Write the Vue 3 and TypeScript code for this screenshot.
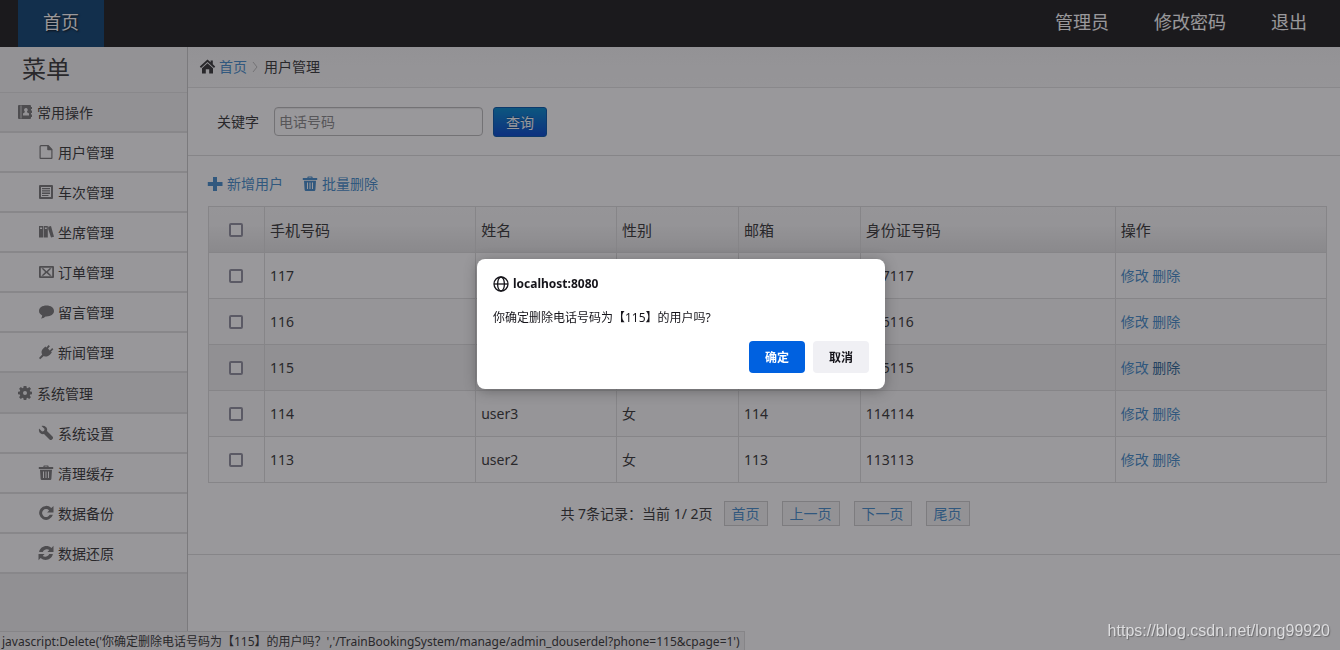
<script setup lang="ts">
import { ref } from 'vue'

interface MenuItem {
  label: string
  icon: string
}
interface MenuGroup extends MenuItem {
  items: MenuItem[]
}
interface User {
  phone: string
  name: string
  sex: string
  mail: string
  card: string
}

const icons: Record<string, string> = {
  book: 'M1 0H12Q13 0 13 1V2H14V4H13V5.5H14V8H13V9.5H14V12H13V13Q13 14 12 14H1Q0 14 0 13V1Q0 0 1 0ZM2.6 0.6V13.4H3.4V0.6ZM7.8 3A1.9 1.9 0 0 0 6.8 6.4V7.2L5 8.4V10.4H11V8.4L9 7.2V6.4A1.9 1.9 0 0 0 7.8 3Z',
  file: 'M2 0H9.5L13.5 4.2V13Q13.5 14 12.5 14H1.5Q0.5 14 0.5 13V1.5Q0.5 0 2 0ZM2.2 1.2Q1.7 1.2 1.7 1.8V12.8H12.3V5.2H9Q8.2 5.2 8.2 4.4V1.2Z',
  list: 'M1 0H13Q14 0 14 1V13Q14 14 13 14H1Q0 14 0 13V1Q0 0 1 0ZM2 2V12H12V2ZM3 3H11V4.3H3ZM3 5.3H11V6.6H3ZM3 7.6H11V8.9H3ZM3 9.9H9.5V11.1H3Z',
  books: 'M0 1H4.2V12.6H0ZM1.1 2.4V4H3.1V2.4ZM4.8 1H8.8V12.6H4.8ZM5.9 2.4V4H7.7V2.4ZM9.2 1.8L12 1L15 11.8L12 12.6L9.2 4Z',
  mail: 'M1 1H14Q15 1 15 2V12Q15 13 14 13H1Q0 13 0 12V2Q0 1 1 1ZM1.8 2.8V11.2H13.2V2.8ZM2.4 3.3H4.4L7.5 6.2L10.6 3.3H12.6L8.9 7L12.6 10.7H10.6L7.5 7.9L4.4 10.7H2.4L6.1 7Z',
  comment: 'M7.5 0.6C11.8 0.6 15 2.8 15 6C15 9.2 11.8 11.4 7.5 11.4L6.6 11.4Q4.8 13.4 1.8 13.6Q3.2 12.2 3.2 10.4C1.2 9.5 0 8 0 6C0 2.8 3.2 0.6 7.5 0.6Z',
  plug: 'M9.6 0L10.9 1.2L9 3.6L10.8 5.4L13.2 3L14.4 4.2L12 6.7L12.9 7.6L10.9 9.8C9 11.7 6.6 12 4.8 11L1.2 14.2L0 13L3.2 9.4C2 7.6 2.4 5.4 4 3.8L6.4 1.4L7.4 2.4Z',
  cog: 'M5.6 0H8.4L8.7 1.8L9.7 2.2L11.3 1.1L13 2.8L11.8 4.4L12.2 5.4L14 5.7V8.3L12.2 8.6L11.8 9.6L12.9 11.2L11.2 12.9L9.6 11.8L8.6 12.2L8.3 14H5.7L5.4 12.2L4.4 11.8L2.8 12.9L1.1 11.2L2.2 9.6L1.8 8.6L0 8.3V5.7L1.8 5.4L2.2 4.4L1.1 2.8L2.8 1.1L4.4 2.2L5.4 1.8ZM7 5A2 2 0 1 0 7 9A2 2 0 1 0 7 5Z',
  wrench: 'M2.5 0L5.6 3.1L5 5L3.1 5.6L0 2.5C-0.4 4.5 0.1 6.3 1.4 7.3Q3 8.5 5 8L10.5 13.5Q11.6 14.5 12.7 13.8L13.8 12.7Q14.5 11.6 13.5 10.6L8 5C8.5 3.4 8 1.9 6.9 0.9C5.7 -0.2 4 -0.5 2.5 0Z',
  trash: 'M5.2 -0.6H8.8Q9.6 -0.6 9.6 0.2V1H14.2V3H-0.2V1H4.4V0.2Q4.4 -0.6 5.2 -0.6ZM5.6 0.4V1H8.4V0.4ZM1 3.8H13L12.4 12.8Q12.3 14 11.2 14H2.8Q1.7 14 1.6 12.8ZM4 5.4V12H5V5.4ZM6.5 5.4V12H7.5V5.4ZM9 5.4V12H10V5.4Z',
  repeat: 'M14.5 0V6.4H8.1L10.1 4.4A4 4 0 1 0 10.7 8.8H13.9A7 7 0 1 1 12.3 2.1Z',
  refresh: 'M14.5 -0.2V5.9H8.4L10.3 4C8.2 2.6 5 3.2 3.8 5.9H0.1C1.1 0.2 8.2 -1.8 12.4 1.9ZM-0.5 14.2V8.1H5.6L3.7 10C5.8 11.4 9 10.8 10.2 8.1H13.9C12.9 13.8 5.8 15.8 1.6 12.1Z',
  home: 'M7.5 -0.6L10.6 2.2V0.6H12.8V4.2L15.2 6.6L14 7.9L7.5 1.9L1 7.9L-0.2 6.6ZM7.5 3.3L13 8.3V13.6H9.2V9.3H5.8V13.6H2V8.3Z',
  plus: 'M5 0H9V5H14.5V9H9V14H5V9H-0.2V5H5Z',
}

const menu: MenuGroup[] = [
  {
    label: '常用操作',
    icon: 'book',
    items: [
      { label: '用户管理', icon: 'file' },
      { label: '车次管理', icon: 'list' },
      { label: '坐席管理', icon: 'books' },
      { label: '订单管理', icon: 'mail' },
      { label: '留言管理', icon: 'comment' },
      { label: '新闻管理', icon: 'plug' },
    ],
  },
  {
    label: '系统管理',
    icon: 'cog',
    items: [
      { label: '系统设置', icon: 'wrench' },
      { label: '清理缓存', icon: 'trash' },
      { label: '数据备份', icon: 'repeat' },
      { label: '数据还原', icon: 'refresh' },
    ],
  },
]

const users: User[] = [
  { phone: '117', name: '', sex: '', mail: '', card: '117117' },
  { phone: '116', name: '', sex: '', mail: '', card: '116116' },
  { phone: '115', name: '', sex: '', mail: '', card: '115115' },
  { phone: '114', name: 'user3', sex: '女', mail: '114', card: '114114' },
  { phone: '113', name: 'user2', sex: '女', mail: '113', card: '113113' },
]

const columns = ['手机号码', '姓名', '性别', '邮箱', '身份证号码', '操作']
const pages = ['首页', '上一页', '下一页', '尾页']
const active = '115'
const keyword = ref('')
const confirming = ref(true)
</script>

<template>
  <div class="app">
    <header class="topbar">
      <a class="tab" href="#">首页</a>
      <nav class="account">
        <a href="#">管理员</a>
        <a href="#">修改密码</a>
        <a href="#">退出</a>
      </nav>
    </header>

    <div class="body">
      <aside class="sidebar">
        <h1 class="menu-title">菜单</h1>
        <section v-for="group in menu" :key="group.label" class="group">
          <h2 class="group-title">
            <svg class="icon" viewBox="0 0 14 14"><path :d="icons[group.icon]" fill-rule="evenodd" /></svg>
            <span>{{ group.label }}</span>
          </h2>
          <a v-for="item in group.items" :key="item.label" class="item" href="#">
            <svg class="icon" viewBox="0 0 14 14"><path :d="icons[item.icon]" fill-rule="evenodd" /></svg>
            <span>{{ item.label }}</span>
          </a>
        </section>
      </aside>

      <main class="main">
        <nav class="crumbs">
          <svg class="icon home" viewBox="0 0 14 14"><path :d="icons.home" /></svg>
          <a href="#">首页</a>
          <svg class="chevron" viewBox="0 0 6 12"><path d="M1 1L5 6L1 11" /></svg>
          <span>用户管理</span>
        </nav>

        <form class="search" @submit.prevent>
          <label for="keyword">关键字</label>
          <input id="keyword" v-model="keyword" type="text" placeholder="电话号码" />
          <button type="submit">查询</button>
        </form>

        <section class="content">
          <div class="tools">
            <a href="#">
              <svg class="icon" viewBox="0 0 14 14"><path :d="icons.plus" /></svg>
              <span>新增用户</span>
            </a>
            <a href="#">
              <svg class="icon" viewBox="0 0 14 14"><path :d="icons.trash" fill-rule="evenodd" /></svg>
              <span>批量删除</span>
            </a>
          </div>

          <table class="users">
            <colgroup>
              <col class="c-check" />
              <col class="c-phone" />
              <col class="c-name" />
              <col class="c-small" />
              <col class="c-small" />
              <col class="c-card" />
              <col class="c-action" />
            </colgroup>
            <thead>
              <tr>
                <th class="check"><input type="checkbox" aria-label="全选" /></th>
                <th v-for="column in columns" :key="column">{{ column }}</th>
              </tr>
            </thead>
            <tbody>
              <tr v-for="user in users" :key="user.phone" :class="{ active: user.phone === active }">
                <td class="check"><input type="checkbox" :aria-label="user.phone" /></td>
                <td>{{ user.phone }}</td>
                <td>{{ user.name }}</td>
                <td>{{ user.sex }}</td>
                <td>{{ user.mail }}</td>
                <td>{{ user.card }}</td>
                <td><a href="#">修改</a> <a class="delete" href="#" @click.prevent="confirming = true">删除</a></td>
              </tr>
            </tbody>
          </table>

          <div class="pager">
            <span>共 7条记录：当前 1/ 2页</span>
            <nav>
              <a v-for="page in pages" :key="page" href="#">{{ page }}</a>
            </nav>
          </div>
        </section>
      </main>
    </div>

    <div class="status">javascript:Delete('你确定删除电话号码为【115】的用户吗？','/TrainBookingSystem/manage/admin_douserdel?phone=115&amp;cpage=1')</div>

    <div v-if="confirming" class="shade"></div>
    <div v-if="confirming" class="dialog" role="dialog" aria-labelledby="dialog-title">
      <div id="dialog-title" class="dialog-title">
        <svg viewBox="0 0 16 16">
          <circle cx="8" cy="8" r="7" />
          <ellipse cx="8" cy="8" rx="3.4" ry="7" />
          <path d="M1 8H15" />
        </svg>
        <span>localhost:8080</span>
      </div>
      <p>你确定删除电话号码为【115】的用户吗?</p>
      <div class="dialog-actions">
        <button class="primary" type="button" @click="confirming = false">确定</button>
        <button type="button" @click="confirming = false">取消</button>
      </div>
    </div>

    <div class="watermark">https://blog.csdn.net/long99920</div>
  </div>
</template>

<style>
body {
  margin: 0;
}
</style>

<style scoped>
.app,
.app * {
  box-sizing: border-box;
}
.app {
  display: flex;
  flex-direction: column;
  min-height: 100vh;
  color: #333;
  background: #fff;
  font-family: 'Noto Sans', 'Noto Sans CJK SC', sans-serif;
  font-size: 14px;
  line-height: 20px;
}
a {
  color: #428bca;
  text-decoration: none;
}
button,
input {
  font-family: inherit;
}
.icon {
  width: 14px;
  height: 14px;
  flex: none;
  fill: currentColor;
  overflow: visible;
}

.topbar {
  display: flex;
  justify-content: space-between;
  height: 47px;
  padding: 0 33px 0 18px;
  background: #1b1b1b;
  font-size: 18px;
  line-height: 44px;
}
.topbar a {
  color: #fff;
}
.tab {
  padding: 0 25px;
  background: #0a4070;
  text-shadow: 1px 1px 2px #000;
}
.account {
  display: flex;
  gap: 45px;
}

.body {
  display: flex;
  flex: 1;
}
.sidebar {
  width: 188px;
  flex: none;
  background: #f1f1f1;
  border-right: 1px solid #c8c8c8;
}
.menu-title {
  margin: 0;
  height: 46px;
  padding-left: 22px;
  border-bottom: 1px solid #e2e2e2;
  background: #f5f5f5;
  font-size: 24px;
  font-weight: 400;
  line-height: 44px;
}
.group-title,
.item {
  display: flex;
  align-items: center;
  gap: 5px;
  height: 40px;
  margin: 0;
  border-bottom: 2px solid #e0e0e0;
  color: #333;
  font-size: 14px;
  font-weight: 400;
}
.group-title span,
.item span {
  padding-top: 2px;
}
.group-title {
  padding-left: 18px;
  background: #f3f3f3;
}
.group + .group .group-title {
  height: 41px;
}
.item {
  padding-left: 39px;
  background: #fefefe;
}
.sidebar .icon {
  color: #777;
}

.main {
  flex: 1;
  min-width: 0;
}
.crumbs {
  display: flex;
  align-items: center;
  height: 41px;
  padding-left: 12px;
  border-bottom: 1px solid #e2e2e2;
  background: linear-gradient(#f5f5f5, #f9f9f9);
}
.home {
  margin-right: 5px;
}
.chevron {
  width: 6px;
  height: 12px;
  margin: 0 6px 0 5px;
  fill: none;
  stroke: #bbb;
}
.search {
  display: flex;
  align-items: center;
  height: 68px;
  padding-left: 29px;
  border-bottom: 1px solid #ddd;
}
.search input {
  width: 209px;
  height: 29px;
  margin: 0 10px 0 15px;
  padding: 0 4px;
  border: 1px solid #bbb;
  border-radius: 4px;
  background: #fff;
  box-shadow: inset 0 1px 1px rgba(0, 0, 0, 0.08);
  color: #333;
  font-size: 14px;
}
.search input::placeholder {
  color: #888;
  opacity: 1;
}
.search button {
  height: 30px;
  padding: 0 12px;
  border: 1px solid #0055aa;
  border-radius: 3px;
  background: linear-gradient(#0088cc, #0044cc);
  color: #fff;
  font-size: 14px;
  text-shadow: 0 -1px 0 rgba(0, 0, 0, 0.25);
}

.content {
  padding: 17px 13px 28px 20px;
  border-bottom: 1px solid #ddd;
}
.tools {
  display: flex;
  gap: 20px;
  margin-bottom: 12px;
}
.tools a {
  display: flex;
  align-items: center;
  gap: 5px;
  height: 21px;
}
.users {
  width: 100%;
  table-layout: fixed;
  border-collapse: collapse;
}
.c-check {
  width: 5%;
}
.c-phone {
  width: 18.9%;
}
.c-name {
  width: 12.6%;
}
.c-small {
  width: 10.9%;
}
.c-card {
  width: 22.8%;
}
.c-action {
  width: 18.9%;
}
.users th,
.users td {
  height: 46px;
  padding: 0 5px;
  border: 1px solid #ddd;
  text-align: left;
  font-weight: 400;
}
.users th {
  font-size: 15px;
}
.users .check {
  text-align: center;
}
.users thead tr {
  background: linear-gradient(#f9f9f9, #f7f7f7 40%, #e3e3e3);
}
.users tbody tr:nth-child(even) {
  background: #f9f9f9;
}
.users tbody tr.active {
  background: #f0f0f0;
}
.active .delete {
  color: #2a6496;
}
.users input {
  appearance: none;
  display: block;
  width: 14px;
  height: 14px;
  margin: 0 auto;
  border: 2px solid #8f8f9d;
  border-radius: 2px;
  background: #fff;
}
.pager {
  display: flex;
  justify-content: center;
  align-items: center;
  gap: 11px;
  margin-top: 18px;
  padding-right: 5px;
}
.pager nav {
  display: flex;
  gap: 14px;
}
.pager a {
  height: 25px;
  padding: 0 7px;
  border: 1px solid #ccc;
  background: #f5f5f5;
  line-height: 23px;
}

.status {
  position: fixed;
  left: 0;
  bottom: 0;
  height: 19px;
  padding: 0 4px 0 2px;
  border: 1px solid #ddd;
  border-left: 0;
  border-bottom: 0;
  background: #f5f5f5;
  font-size: 12px;
  line-height: 19px;
  white-space: nowrap;
}
.shade {
  position: fixed;
  inset: 0;
  background: rgba(28, 27, 34, 0.45);
}
.dialog {
  position: fixed;
  top: 259px;
  left: calc(50% - 193px);
  width: 408px;
  padding: 16px;
  border-radius: 8px;
  background: #fff;
  box-shadow: 0 2px 14px rgba(0, 0, 0, 0.3);
  color: #15141a;
  font-size: 12px;
  line-height: 18px;
}
.dialog-title {
  display: flex;
  align-items: center;
  gap: 4px;
  font-weight: 700;
}
.dialog-title svg {
  width: 16px;
  height: 16px;
  fill: none;
  stroke: currentColor;
  stroke-width: 1.3;
}
.dialog p {
  margin: 16px 0 14px;
}
.dialog-actions {
  display: flex;
  justify-content: flex-end;
  gap: 8px;
}
.dialog button {
  width: 56px;
  height: 32px;
  padding: 0;
  border: 0;
  border-radius: 4px;
  background: #f0f0f4;
  color: #15141a;
  font-size: 12px;
  font-weight: 700;
}
.dialog .primary {
  background: #0061e0;
  color: #fff;
}
.watermark {
  position: fixed;
  right: 10px;
  bottom: 9px;
  color: #dcdcde;
  font-family: 'Liberation Sans', Arial, sans-serif;
  font-size: 16px;
  text-shadow: 1px 1px 1px rgba(0, 0, 0, 0.3);
}
</style>
